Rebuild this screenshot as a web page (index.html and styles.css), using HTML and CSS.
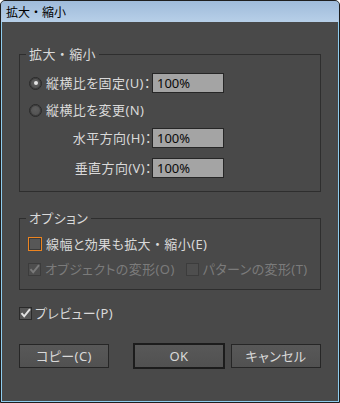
FILE: index.html
```html
<!DOCTYPE html>
<html lang="ja">
<head>
<meta charset="utf-8">
<link rel="stylesheet" href="styles.css">
</head>
<body>
<div class="window">
  <div class="titlebar">拡大・縮小</div>
  <div class="content">
    <fieldset class="group g1">
      <legend>拡大<span class="fw">・</span>縮小</legend>
      <div class="grid">
        <div class="row r1">
          <span class="cell-left"><span class="radio on"></span><span class="lbl">縦横比を固定(U)：</span></span>
          <span class="field">100%</span>
        </div>
        <div class="row r2">
          <span class="cell-left"><span class="radio"></span><span class="lbl">縦横比を変更(N)</span></span>
        </div>
        <div class="row r3">
          <span class="cell-left right"><span class="lbl">水平方向(H)：</span></span>
          <span class="field">100%</span>
        </div>
        <div class="row r4">
          <span class="cell-left right"><span class="lbl">垂直方向(V)：</span></span>
          <span class="field">100%</span>
        </div>
      </div>
    </fieldset>

    <fieldset class="group g2">
      <legend>オプション</legend>
      <div class="row o1">
        <span class="check focus"></span><span class="lbl cl">線幅と効果も拡大<span class="fw">・</span>縮小(E)</span>
      </div>
      <div class="row o2 disabled">
        <span class="check dis"><svg viewBox="0 0 13 13"><path d="M2.5 6.2 L5.2 9.3 L11 2.2"/></svg></span><span class="lbl cl">オブジェクトの変形(O)</span>
        <span class="check dis second"></span><span class="lbl cl">パターンの変形(T)</span>
      </div>
    </fieldset>

    <div class="row preview">
      <span class="check on"><svg viewBox="0 0 13 13"><path d="M2.5 6.2 L5.2 9.3 L11 2.2"/></svg></span><span class="lbl pl">プレビュー(P)</span>
    </div>

    <div class="buttons">
      <button class="btn">コピー(C)</button>
      <div class="btn-right">
        <button class="btn ok">OK</button>
        <button class="btn">キャンセル</button>
      </div>
    </div>
  </div>
</div>
</body>
</html>
```

FILE: styles.css
```css
html, body {
  margin: 0;
  padding: 0;
  background: #ffffff;
}
body {
  width: 340px;
  height: 403px;
  font-family: "Noto Sans", "Noto Sans CJK JP", sans-serif;
  font-size: 13px;
  font-feature-settings: "palt";
  letter-spacing: 0.4px;
  color: #d9d9d9;
}
.fw {
  font-feature-settings: normal;
}
.window {
  box-sizing: border-box;
  width: 340px;
  height: 403px;
  border: 1px solid #1e1e1e;
  border-radius: 5px 5px 0 0;
  background: #494949;
  display: flex;
  flex-direction: column;
  overflow: hidden;
}
.titlebar {
  height: 21px;
  flex: none;
  background: linear-gradient(#9fbbda, #b7cfe8);
  color: #000;
  font-family: "Noto Sans CJK JP", sans-serif;
  font-size: 12px;
  line-height: 22px;
  padding-left: 5px;
  letter-spacing: 0;
  font-feature-settings: normal;
}
.content {
  flex: 1;
  border: 1px solid #8fcdef;
  border-top: 0;
  padding: 24px 17px 0 17px;
  display: flex;
  flex-direction: column;
}
.group {
  margin: 0;
  border: 1px solid #2e2e2e;
  padding: 0 8px;
  min-inline-size: 0;
}
.group legend {
  padding: 0 3px;
  margin-left: -2px;
  line-height: 16px;
  height: 16px;
}
.g1 {
  padding-top: 11px;
  padding-bottom: 13px;
}
.row {
  display: flex;
  align-items: center;
  height: 20px;
  line-height: 20px;
  white-space: nowrap;
}
.r2 { margin-top: 7px; }
.r3 { margin-top: 8px; }
.r4 { margin-top: 10px; }
.cell-left {
  display: flex;
  align-items: center;
  width: 124px;
}
.cell-left.right {
  justify-content: flex-end;
}
.field {
  box-sizing: border-box;
  width: 72px;
  height: 20px;
  border: 1px solid #262626;
  background: #a4a4a4;
  color: #0a0a0a;
  padding-left: 4px;
  line-height: 18px;
  letter-spacing: 0;
}
.radio {
  box-sizing: border-box;
  width: 13px;
  height: 13px;
  border-radius: 50%;
  border: 1px solid #2a2a2a;
  background: radial-gradient(circle at 50% 40%, #5d5d5d, #4f4f4f);
  box-shadow: inset 0 0 0 1px #3c3c3c;
  margin: 0 4px 0 1px;
  position: relative;
  flex: none;
}
.radio.on::after {
  content: "";
  position: absolute;
  left: 3.5px;
  top: 3.5px;
  width: 4px;
  height: 4px;
  border-radius: 50%;
  background: #e4e4e4;
}
.g2 {
  margin-top: 18px;
  padding-top: 8px;
  padding-bottom: 10px;
}
.o2 { margin-top: 5px; }
.check {
  box-sizing: border-box;
  width: 13px;
  height: 13px;
  border: 1px solid #2a2a2a;
  background: #565656;
  flex: none;
  position: relative;
}
.check svg {
  position: absolute;
  left: -1px;
  top: -1px;
  width: 13px;
  height: 13px;
  fill: none;
  stroke: #e2e2e2;
  stroke-width: 2;
}
.check.focus {
  width: 14px;
  height: 14px;
  border-color: #ec8420;
  box-shadow: inset 0 0 0 1px #3a3a3a;
  background: #575757;
}
.check.dis {
  border-color: #3c3c3c;
  background: #4e4e4e;
}
.check.dis svg {
  stroke: #7a7a7a;
}
.check.second {
  margin-left: 11px;
}
.cl {
  margin-left: 4px;
}
.disabled .lbl {
  color: #7b7b7b;
}
.preview {
  margin-top: 13px;
}
.pl {
  margin-left: 3px;
}
.buttons {
  margin-top: 20px;
  height: 26px;
  display: flex;
  align-items: center;
  justify-content: space-between;
}
.btn-right {
  display: flex;
  align-items: center;
  gap: 6px;
}
.btn {
  box-sizing: border-box;
  width: 90px;
  height: 24px;
  border: 1px solid #262626;
  background: linear-gradient(#585858, #515151);
  color: #d9d9d9;
  font: inherit;
  letter-spacing: 0.4px;
  font-feature-settings: "palt";
  padding: 0;
  margin: 0;
  line-height: 22px;
}
.btn.ok {
  width: 92px;
  height: 26px;
  border: 2px solid #1c1c1c;
}
```
